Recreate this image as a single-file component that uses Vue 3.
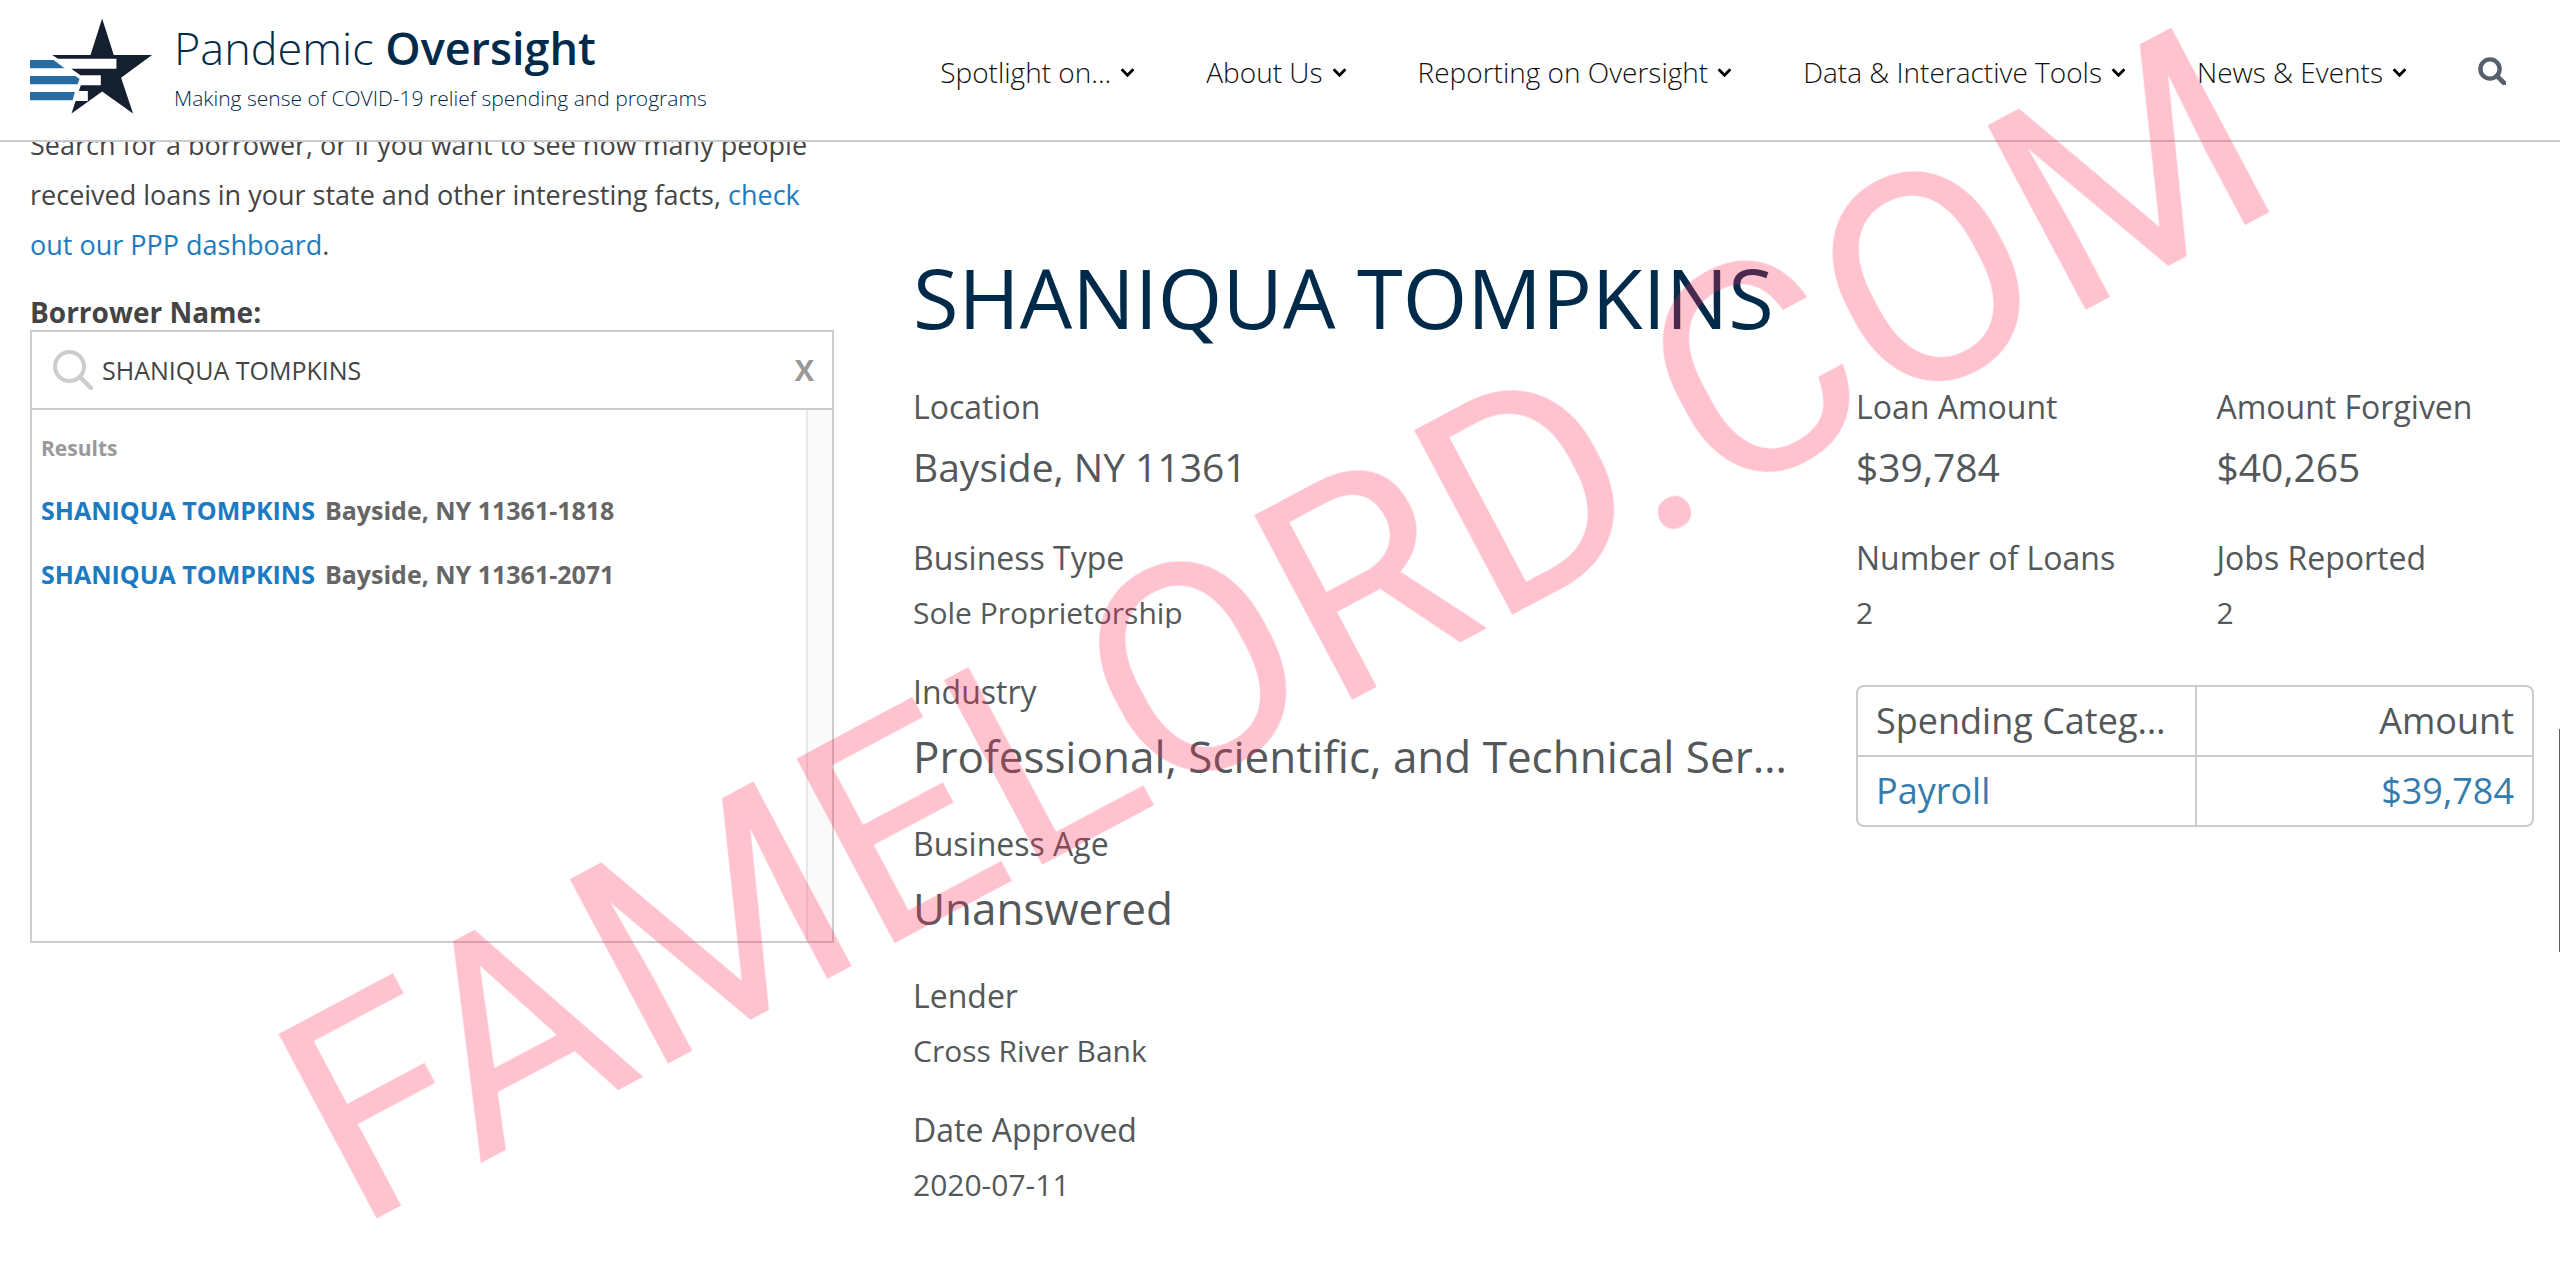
<script setup>
import { ref } from 'vue'

const menu = ['Spotlight on...', 'About Us', 'Reporting on Oversight', 'Data & Interactive Tools', 'News & Events']

const borrower = ref('SHANIQUA TOMPKINS')

const results = [
    { name: 'SHANIQUA TOMPKINS', place: 'Bayside, NY 11361-1818' },
    { name: 'SHANIQUA TOMPKINS', place: 'Bayside, NY 11361-2071' }
]

const details = [
    { label: 'Location', value: 'Bayside, NY 11361', size: 'medium' },
    { label: 'Business Type', value: 'Sole Proprietorship', size: 'small' },
    { label: 'Industry', value: 'Professional, Scientific, and Technical Services', size: 'large' },
    { label: 'Business Age', value: 'Unanswered', size: 'large' },
    { label: 'Lender', value: 'Cross River Bank', size: 'small' },
    { label: 'Date Approved', value: '2020-07-11', size: 'small' }
]

const stats = [
    { label: 'Loan Amount', value: '$39,784', size: 'medium' },
    { label: 'Amount Forgiven', value: '$40,265', size: 'medium' },
    { label: 'Number of Loans', value: '2', size: 'small' },
    { label: 'Jobs Reported', value: '2', size: 'small' }
]

function clearSearch() {
    borrower.value = ''
}
</script>
<template>
    <div class="page">
        <header class="header">
            <a class="brand" href="#">
                <svg class="logo" viewBox="30 24 367 286" aria-hidden="true">
                    <path fill="#14202f" d="M247 24 282 134H397L304 202 340 310 247 244 155 310 167 272H204V242H177L183 225H243V195H182L154 175H290V145H114L97 134H212Z" />
                    <path fill="#266ca1" d="M30 149H101L134 174H30ZM30 197H167L179 206 173 222H30ZM30 245H165L158 270H30Z" />
                </svg>
                <span class="brand-text">
                    <span class="brand-name">Pandemic <b>Oversight</b></span>
                    <span class="tagline">Making sense of COVID-19 relief spending and programs</span>
                </span>
            </a>
            <nav class="nav">
                <button v-for="item in menu" :key="item" type="button" class="nav-item">
                    {{ item }}
                    <svg class="chevron" viewBox="0 0 14 10" aria-hidden="true">
                        <path d="M1.5 2 7 7.5 12.5 2" fill="none" stroke="#000" stroke-width="2.6" />
                    </svg>
                </button>
                <button type="button" class="search-button" aria-label="Search">
                    <svg viewBox="0 0 28 28" aria-hidden="true">
                        <circle cx="12" cy="12" r="9.6" fill="none" stroke="#56616d" stroke-width="4.4" />
                        <path d="M19 19 26 26" stroke="#56616d" stroke-width="4.6" stroke-linecap="round" />
                    </svg>
                </button>
            </nav>
        </header>

        <main class="main">
            <section class="sidebar">
                <p class="intro">
                    Search for a borrower, or if you want to see how many people received loans in your state
                    and other interesting facts, <a href="#">check out our PPP dashboard</a>.
                </p>
                <label class="search-label" for="borrower">Borrower Name:</label>
                <div class="search-panel">
                    <div class="search-row">
                        <svg class="lens" viewBox="0 0 40 40" aria-hidden="true">
                            <circle cx="16.5" cy="16.5" r="14.5" fill="none" stroke="#ccc" stroke-width="4" />
                            <path d="M27 27 38 38" stroke="#ccc" stroke-width="4.5" stroke-linecap="round" />
                        </svg>
                        <input id="borrower" v-model="borrower" type="text" class="search-input">
                        <button type="button" class="clear" aria-label="Clear" @click="clearSearch">X</button>
                    </div>
                    <div class="results">
                        <div class="result-list">
                            <div class="result-title">Results</div>
                            <div v-for="r in results" :key="r.place" class="result">
                                <a href="#">{{ r.name }}</a>
                                <span>{{ r.place }}</span>
                            </div>
                        </div>
                        <div class="track"></div>
                    </div>
                </div>
            </section>

            <section class="loan">
                <h1>SHANIQUA TOMPKINS</h1>
                <div class="loan-columns">
                    <dl class="facts">
                        <div v-for="d in details" :key="d.label">
                            <dt>{{ d.label }}</dt>
                            <dd :class="d.size">{{ d.value }}</dd>
                        </div>
                    </dl>
                    <div class="amounts">
                        <dl class="stats">
                            <div v-for="s in stats" :key="s.label">
                                <dt>{{ s.label }}</dt>
                                <dd :class="s.size">{{ s.value }}</dd>
                            </div>
                        </dl>
                        <table class="spending">
                            <thead>
                                <tr>
                                    <th>Spending Category</th>
                                    <th>Amount</th>
                                </tr>
                            </thead>
                            <tbody>
                                <tr>
                                    <td><a href="#">Payroll</a></td>
                                    <td><a href="#">$39,784</a></td>
                                </tr>
                            </tbody>
                        </table>
                    </div>
                </div>
            </section>
        </main>

        <div class="scroll-thumb"></div>
        <div class="watermark"><span>FAMELORD.COM</span></div>
    </div>
</template>
<style>
body {
    background: #fff;
}
</style>
<style scoped>
.page {
    font-family: "Open Sans", "Noto Sans", sans-serif;
    color: #444;
    min-height: 100vh;
    overflow: hidden;
}

button {
    font-family: inherit;
    border: 0;
    padding: 0;
    background: none;
    cursor: pointer;
}

a {
    color: #1c7bc0;
    text-decoration: none;
}

.header {
    position: fixed;
    top: 0;
    left: 0;
    right: 0;
    z-index: 2;
    box-sizing: border-box;
    height: 142px;
    padding: 0 54px 0 30px;
    display: flex;
    justify-content: space-between;
    align-items: flex-start;
    background: #fff;
    border-bottom: 2px solid #ccc;
}

.brand {
    display: flex;
    gap: 22px;
    padding-top: 18px;
    color: #002a4a;
}

.logo {
    width: 122px;
    height: 96px;
}

.brand-text {
    display: flex;
    flex-direction: column;
}

.brand-name {
    font-size: 45px;
    line-height: 60px;
    font-weight: 300;
}

.brand-name b {
    font-weight: 600;
}

.tagline {
    font-size: 21px;
    line-height: 40px;
    font-weight: 300;
}

.nav {
    display: flex;
    align-items: center;
    gap: 71px;
    height: 142px;
}

.nav-item {
    display: flex;
    align-items: center;
    gap: 9px;
    padding-top: 2px;
    font-size: 28px;
    line-height: 40px;
    font-weight: 300;
    color: #111;
}

.chevron {
    width: 15px;
    height: 11px;
}

.search-button svg {
    display: block;
    width: 28px;
    height: 28px;
}

.main {
    display: grid;
    grid-template-columns: 804fr 1621fr;
    gap: 79px;
    padding: 120px 26px 0 30px;
}

.intro {
    margin: 0 0 24px;
    font-size: 27px;
    line-height: 50px;
}

.search-label {
    display: block;
    font-size: 28px;
    line-height: 36px;
    font-weight: 700;
}

.search-panel {
    border: 2px solid #ccc;
}

.search-row {
    display: flex;
    align-items: center;
    height: 76px;
    padding: 0 18px 0 21px;
    border-bottom: 2px solid #ccc;
}

.lens {
    width: 40px;
    height: 40px;
}

.search-input {
    flex: 1;
    min-width: 0;
    padding: 0 9px;
    border: 0;
    outline: 0;
    background: none;
    font: 25px/40px "Open Sans", sans-serif;
    color: #444;
}

.clear {
    font-size: 29px;
    line-height: 40px;
    font-weight: 700;
    color: #999;
}

.results {
    display: flex;
    height: 531px;
}

.result-list {
    flex: 1;
    padding: 16px 9px;
}

.result-title {
    padding-bottom: 8px;
    font-size: 21px;
    line-height: 44px;
    font-weight: 700;
    color: #999;
}

.result {
    display: flex;
    gap: 10px;
    font-size: 25px;
    line-height: 64px;
    font-weight: 700;
    color: #666;
}

.track {
    width: 24px;
    background: #fafafa;
    border-left: 2px solid #e7e7e7;
}

.loan {
    min-width: 0;
    padding-top: 127px;
    color: #54585a;
}

h1 {
    margin: 0 0 38px;
    font-size: 83px;
    line-height: 100px;
    font-weight: 400;
    color: #002a4a;
}

.loan-columns {
    display: grid;
    grid-template-columns: 880fr 678fr;
    gap: 63px;
}

.facts,
.amounts {
    min-width: 0;
}

dl,
dd {
    margin: 0;
}

dt {
    font-size: 32px;
    line-height: 44px;
}

dd {
    overflow: hidden;
    white-space: nowrap;
    text-overflow: ellipsis;
}

.small {
    height: 48px;
    margin-bottom: 42px;
    font-size: 30px;
    line-height: 66px;
}

.medium {
    margin-bottom: 31px;
    font-size: 39px;
    line-height: 76px;
}

.large {
    margin-bottom: 24px;
    font-size: 44px;
    line-height: 84px;
}

.stats {
    display: grid;
    grid-template-columns: 1fr 1fr;
    column-gap: 43px;
}

.spending {
    width: 100%;
    margin-top: 15px;
    table-layout: fixed;
    border-collapse: separate;
    border-spacing: 0;
    border: 2px solid #ccc;
    border-radius: 8px;
    font-size: 36px;
    line-height: 68px;
}

.spending th,
.spending td {
    padding: 0 18px;
    overflow: hidden;
    white-space: nowrap;
    text-overflow: ellipsis;
    text-align: left;
    font-weight: 400;
}

.spending th {
    border-bottom: 2px solid #ccc;
}

.spending th:last-child,
.spending td:last-child {
    border-left: 2px solid #ccc;
    text-align: right;
}

.spending a {
    color: #357cae;
}

.scroll-thumb {
    position: fixed;
    top: 729px;
    right: 0;
    width: 1px;
    height: 223px;
    background: #56616d;
}

/* overlay text across the whole window */
.watermark {
    position: fixed;
    inset: 0 8px 10px 0;
    z-index: 3;
    display: flex;
    justify-content: center;
    align-items: center;
    pointer-events: none;
}

.watermark span {
    font: 294px/1 Roboto, sans-serif;
    color: rgba(255, 41, 87, 0.28);
    white-space: nowrap;
    transform: rotate(-28deg);
}
</style>
